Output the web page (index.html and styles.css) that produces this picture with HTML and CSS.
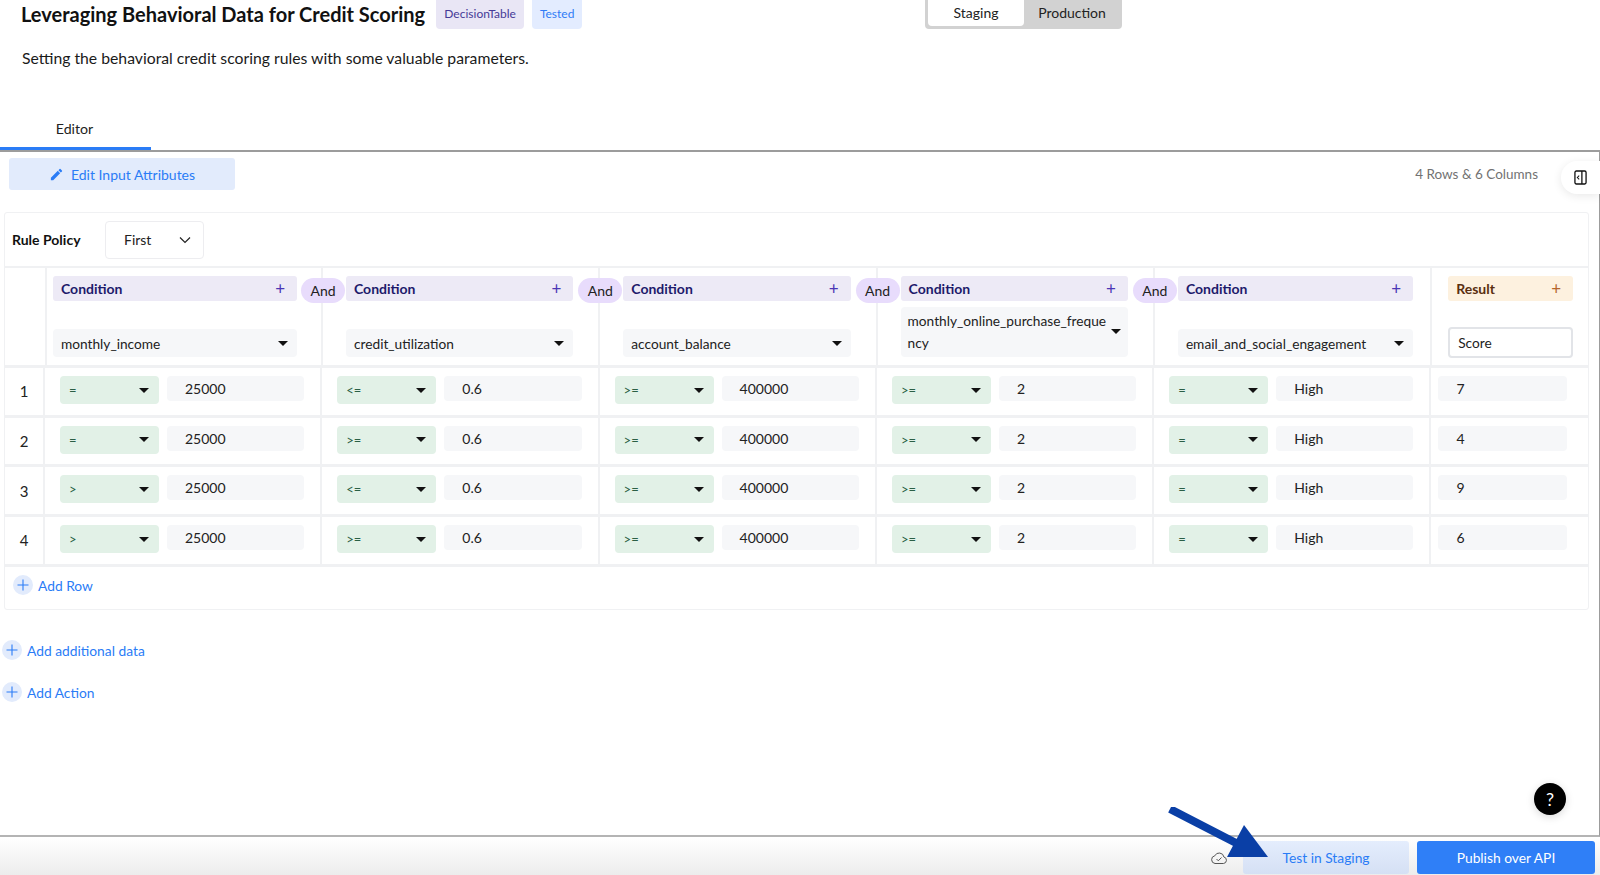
FILE: index.html
```html
<!DOCTYPE html>
<html lang="en">
<head>
<meta charset="utf-8">
<title>Leveraging Behavioral Data for Credit Scoring</title>
<link rel="stylesheet" href="styles.css">
</head>
<body>
<div class="page">
  <header class="top">
    <div class="title-row">
      <h1 class="title">Leveraging Behavioral Data for Credit Scoring</h1>
      <span class="tag tag-purple">DecisionTable</span>
      <span class="tag tag-blue">Tested</span>
      <div class="toggle">
        <span class="toggle-item toggle-on">Staging</span>
        <span class="toggle-item">Production</span>
      </div>
    </div>
    <p class="subtitle">Setting the behavioral credit scoring rules with some valuable parameters.</p>
    <div class="tab">Editor</div>
  </header>

  <main class="main">
    <div class="toolbar">
      <button class="edit-btn">
        <svg class="pencil" viewBox="0 0 24 24"><path d="M3 17.25V21h3.75L17.81 9.94l-3.75-3.75L3 17.25zM20.71 7.04a1 1 0 0 0 0-1.41l-2.34-2.34a1 1 0 0 0-1.41 0l-1.83 1.83 3.75 3.75 1.83-1.83z"/></svg>
        Edit Input Attributes
      </button>
      <span class="counts">4 Rows &amp; 6 Columns</span>
    </div>
    <div class="side-tab">
      <svg class="side-icon" viewBox="0 0 14 16"><rect x="1" y="1" width="12" height="14" rx="1.5" fill="none" stroke="#111" stroke-width="1.4"/><path d="M8.5 1v14" stroke="#111" stroke-width="1.4"/><path d="M5.6 6 3.6 8l2 2" fill="none" stroke="#111" stroke-width="1.1"/></svg>
    </div>

    <section class="card">
      <div class="policy">
        <span class="policy-label">Rule Policy</span>
        <div class="policy-select">First
          <svg class="chev" viewBox="0 0 12 8"><path d="M1 1.5 6 6.5l5-5" fill="none" stroke="#222" stroke-width="1.2"/></svg>
        </div>
      </div>

      <div class="head">
        <div class="hcell hnum"></div>
        <div class="hcell hfirst">
          <div class="chip"><span>Condition</span><span class="plus">+</span></div>
          <div class="sel var"><span>monthly_income</span></div>
          <span class="and">And</span>
        </div>
        <div class="hcell">
          <div class="chip"><span>Condition</span><span class="plus">+</span></div>
          <div class="sel var"><span>credit_utilization</span></div>
          <span class="and">And</span>
        </div>
        <div class="hcell">
          <div class="chip"><span>Condition</span><span class="plus">+</span></div>
          <div class="sel var"><span>account_balance</span></div>
          <span class="and">And</span>
        </div>
        <div class="hcell">
          <div class="chip"><span>Condition</span><span class="plus">+</span></div>
          <div class="sel var var-wrap"><span>monthly_online_purchase_frequency</span></div>
          <span class="and">And</span>
        </div>
        <div class="hcell hlastcond">
          <div class="chip"><span>Condition</span><span class="plus">+</span></div>
          <div class="sel var"><span>email_and_social_engagement</span></div>
        </div>
        <div class="hcell hresult">
          <div class="chip chip-result"><span>Result</span><span class="plus">+</span></div>
          <div class="score">Score</div>
        </div>
      </div>

      <div class="row">
        <div class="num">1</div>
        <div class="cell"><div class="sel op"><span>=</span></div><div class="val">25000</div></div>
        <div class="cell"><div class="sel op"><span>&lt;=</span></div><div class="val">0.6</div></div>
        <div class="cell"><div class="sel op"><span>&gt;=</span></div><div class="val">400000</div></div>
        <div class="cell"><div class="sel op"><span>&gt;=</span></div><div class="val">2</div></div>
        <div class="cell"><div class="sel op"><span>=</span></div><div class="val">High</div></div>
        <div class="cell cell-result"><div class="val">7</div></div>
      </div>
      <div class="row">
        <div class="num">2</div>
        <div class="cell"><div class="sel op"><span>=</span></div><div class="val">25000</div></div>
        <div class="cell"><div class="sel op"><span>&gt;=</span></div><div class="val">0.6</div></div>
        <div class="cell"><div class="sel op"><span>&gt;=</span></div><div class="val">400000</div></div>
        <div class="cell"><div class="sel op"><span>&gt;=</span></div><div class="val">2</div></div>
        <div class="cell"><div class="sel op"><span>=</span></div><div class="val">High</div></div>
        <div class="cell cell-result"><div class="val">4</div></div>
      </div>
      <div class="row">
        <div class="num">3</div>
        <div class="cell"><div class="sel op"><span>&gt;</span></div><div class="val">25000</div></div>
        <div class="cell"><div class="sel op"><span>&lt;=</span></div><div class="val">0.6</div></div>
        <div class="cell"><div class="sel op"><span>&gt;=</span></div><div class="val">400000</div></div>
        <div class="cell"><div class="sel op"><span>&gt;=</span></div><div class="val">2</div></div>
        <div class="cell"><div class="sel op"><span>=</span></div><div class="val">High</div></div>
        <div class="cell cell-result"><div class="val">9</div></div>
      </div>
      <div class="row">
        <div class="num">4</div>
        <div class="cell"><div class="sel op"><span>&gt;</span></div><div class="val">25000</div></div>
        <div class="cell"><div class="sel op"><span>&gt;=</span></div><div class="val">0.6</div></div>
        <div class="cell"><div class="sel op"><span>&gt;=</span></div><div class="val">400000</div></div>
        <div class="cell"><div class="sel op"><span>&gt;=</span></div><div class="val">2</div></div>
        <div class="cell"><div class="sel op"><span>=</span></div><div class="val">High</div></div>
        <div class="cell cell-result"><div class="val">6</div></div>
      </div>

      <div class="add-row">
        <span class="add"><span class="add-icon"><svg viewBox="0 0 12 12"><path d="M6 .5v11M.5 6h11" stroke="#2a7cf6" stroke-width="1.1"/></svg></span>Add Row</span>
      </div>
    </section>

    <div class="extras">
      <span class="add"><span class="add-icon"><svg viewBox="0 0 12 12"><path d="M6 .5v11M.5 6h11" stroke="#2a7cf6" stroke-width="1.1"/></svg></span>Add additional data</span>
      <span class="add"><span class="add-icon"><svg viewBox="0 0 12 12"><path d="M6 .5v11M.5 6h11" stroke="#2a7cf6" stroke-width="1.1"/></svg></span>Add Action</span>
    </div>

    <div class="help">?</div>
  </main>

  <footer class="footer">
    <svg class="cloud" viewBox="0 0 18 14"><path d="M5 12.5h8.4a3.3 3.3 0 0 0 .5-6.5A4.8 4.8 0 0 0 4.800 4.800 3.900 3.900 0 0 0 5 12.500z" fill="none" stroke="#555" stroke-width="1"/><path d="m6.500 8 1.800 1.800 3.200-3.300" fill="none" stroke="#555" stroke-width="1"/></svg>
    <button class="btn btn-test">Test in Staging</button>
    <button class="btn btn-publish">Publish over API</button>
  </footer>

  <svg class="arrow" viewBox="0 0 110 60"><path d="M2 2 70 37" stroke="#0a3fa6" stroke-width="8"/><path d="M76 18 100 50H59z" fill="#0a3fa6"/></svg>
</div>
</body>
</html>
```
FILE: styles.css
```css
* { box-sizing: border-box; }
html, body { margin: 0; padding: 0; }
body { font-family: Lato, "Open Sans", sans-serif; font-size: 14px; color: #111; background: #fff; }
button { font-family: inherit; border: 0; cursor: pointer; }

.page { position: relative; width: 1600px; height: 875px; overflow: hidden; display: flex; flex-direction: column; }

/* header */
.top { height: 150px; flex: none; }
.title-row { display: flex; align-items: center; height: 29px; padding-left: 21px; }
.title { margin: 0; font-size: 20px; font-weight: 700; color: #111; line-height: 29px; }
.tag { height: 29px; line-height: 28px; margin-left: 8px; padding: 0; font-size: 12px; border-radius: 0 0 4px 4px; text-align: center; }
.tag-purple { width: 88px; margin-left: 11px; background: #e9e6f5; color: #463a97; }
.tag-blue { width: 50px; background: #e3ecff; color: #2f7bf6; }
.toggle { display: flex; margin-left: auto; margin-right: 478px; width: 197px; height: 29px; padding: 0 0 3px 3px; background: #d2d2d2; border-radius: 0 0 4px 4px; }
.toggle-item { width: 96px; text-align: center; line-height: 26px; font-size: 14px; color: #222; }
.toggle-on { background: #fff; border-radius: 0 0 4px 4px; }
.subtitle { margin: 19px 0 0; padding-left: 22px; height: 20px; line-height: 20px; font-size: 15.75px; color: #1a1a1a; }
.tab { margin-top: 41px; width: 151px; height: 41px; line-height: 34px; padding: 3px 2px 0 0; text-align: center; font-size: 14.2px; color: #222; border-bottom: 3px solid #2a7cf6; }

/* main */
.main { position: relative; flex: none; height: 687px; border-top: 2px solid #9c9c9c; border-right: 1px solid #9c9c9c; border-bottom: 2px solid #b4b4b4; }
.toolbar { display: flex; justify-content: space-between; align-items: center; height: 38px; padding: 6px 61px 0 9px; margin-bottom: 22px; }
.edit-btn { display: flex; align-items: center; justify-content: center; gap: 7px; width: 226px; height: 32px; background: #e2ebfc; color: #2a7cf6; font-size: 14px; border-radius: 3px; }
.pencil { width: 15px; height: 15px; fill: #2a7cf6; }
.counts { color: #727272; font-size: 13.5px; }
.side-tab { position: absolute; top: 9px; right: -1px; width: 39px; height: 33px; display: flex; align-items: center; padding-left: 13px; background: #fff; border-radius: 16px 0 0 16px; box-shadow: 0 2px 10px rgba(0,0,0,.09); }
.side-icon { width: 13px; height: 15px; }

/* card */
.card { width: 1585px; height: 398px; margin-left: 4px; border: 1px solid #f0f1f3; border-radius: 3px; }
.policy { display: flex; align-items: center; height: 55px; padding-left: 7px; border-bottom: 2px solid #f0f1f3; }
.policy-label { width: 93px; font-size: 14px; font-weight: 700; color: #111; }
.policy-select { display: flex; align-items: center; justify-content: space-between; width: 99px; height: 38px; padding: 0 12px 0 18px; border: 1px solid #ededf0; border-radius: 4px; font-size: 14px; color: #222; }
.chev { width: 12px; height: 8px; }

.head { display: grid; grid-template-columns: 40px 276px repeat(4, 277.3px) 1fr; height: 100px; border-bottom: 3px solid #f0f1f3; }
.hcell { position: relative; display: flex; flex-direction: column; justify-content: space-between; padding: 8px 25px 8px 23px; border-left: 2px solid #f0f1f3; }
.hnum { border-left: 0; }
.hfirst { padding-left: 6px; padding-right: 24px; }
.hlastcond { padding-right: 17px; }
.hresult { padding: 8px 15px 7px 16px; }
.chip { display: flex; justify-content: space-between; align-items: center; height: 25px; padding: 0 12px 0 8px; background: #edeaf6; border-radius: 3px; font-weight: 700; color: #1d1a6b; }
.plus { font-size: 17px; font-weight: 400; color: #4b36b5; line-height: 1; }
.chip-result { background: #fdf1df; color: #5a2f10; }
.chip-result .plus { color: #b5652b; }
.and { position: absolute; top: 10px; right: -24px; width: 44px; height: 25px; border-radius: 13px; background: #e8dcfc; text-align: center; line-height: 25px; color: #222; z-index: 1; }

.sel { display: flex; align-items: center; justify-content: space-between; border-radius: 4px; }
.sel::after { content: ""; flex: none; width: 0; height: 0; border-left: 5px solid transparent; border-right: 5px solid transparent; border-top: 5px solid #111; }
.var { min-height: 28px; padding: 0 9px 0 8px; background: #f6f7f9; color: #222; font-size: 13.7px; }
.var-wrap { padding: 3px 7px 3px 7px; }
.var-wrap span { width: 204px; word-break: break-all; line-height: 22px; }
.var-wrap::after { margin-left: -4px; margin-top: -1px; }
.score { height: 31px; line-height: 27px; padding: 0 8px; border: 2px solid #e2e4e8; border-radius: 4px; background: #fff; color: #222; font-size: 13.7px; }

.row { display: grid; grid-template-columns: 38px repeat(5, 277.3px) 1fr; height: 49.7px; border-bottom: 3px solid #f0f1f3; }
.num { display: flex; align-items: center; justify-content: center; color: #222; font-size: 15px; }
.cell { display: flex; gap: 8px; align-items: flex-start; padding: 8px 16px 0 15px; border-left: 2px solid #f0f1f3; }
.cell-result { padding-left: 7px; padding-right: 21px; }
.op { flex: none; width: 99px; height: 28px; padding: 0 10px 0 9px; background: #e2f1e7; color: #2b5f45; font-size: 13px; }
.val { flex: 1; height: 25px; line-height: 25px; padding-left: 18px; background: #f6f7f9; border-radius: 4px; font-size: 14px; color: #222; }

.add-row { display: flex; align-items: center; height: 40px; padding: 0 0 3px 8px; }
.add { display: flex; align-items: center; gap: 5px; font-size: 13.8px; color: #2a7cf6; }
.add-icon { display: flex; align-items: center; justify-content: center; width: 20px; height: 20px; border-radius: 50%; background: #e2ebfc; }
.add-icon svg { width: 12px; height: 12px; }
.extras { display: flex; flex-direction: column; gap: 22px; padding: 30px 0 0 2px; }

.help { position: absolute; right: 33px; bottom: 20px; width: 32px; height: 32px; border-radius: 50%; background: #000; color: #fff; text-align: center; line-height: 32px; font-size: 18px; box-shadow: 0 2px 8px rgba(0,0,0,.15); }

/* footer */
.footer { flex: 1; display: flex; align-items: flex-end; justify-content: flex-end; gap: 8px; padding: 0 5px 1px 0; background: linear-gradient(#fff, #ececec); }
.cloud { width: 18px; height: 14px; margin: 0 7px 9px 0; }
.btn { height: 33px; font-size: 13.8px; border-radius: 3px; }
.btn-test { width: 166px; background: linear-gradient(#e4edfd, #d5e0f4); color: #2a7cf6; }
.btn-publish { width: 178px; background: #2f7ff7; color: #fff; }

.arrow { position: absolute; left: 1168px; top: 807px; width: 110px; height: 60px; }
```
